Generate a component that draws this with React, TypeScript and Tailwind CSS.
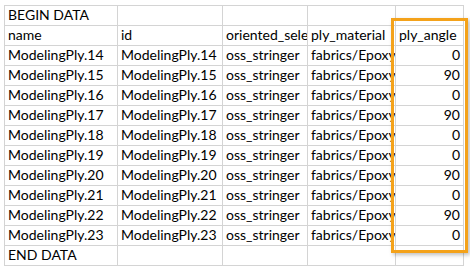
import React from "react";

const rows: [string, string, string, string, number][] = [
  ["ModelingPly.14", "ModelingPly.14", "oss_stringer", "fabrics/Epoxy_Carbon_UD", 0],
  ["ModelingPly.15", "ModelingPly.15", "oss_stringer", "fabrics/Epoxy_Carbon_UD", 90],
  ["ModelingPly.16", "ModelingPly.16", "oss_stringer", "fabrics/Epoxy_Carbon_UD", 0],
  ["ModelingPly.17", "ModelingPly.17", "oss_stringer", "fabrics/Epoxy_Carbon_UD", 90],
  ["ModelingPly.18", "ModelingPly.18", "oss_stringer", "fabrics/Epoxy_Carbon_UD", 0],
  ["ModelingPly.19", "ModelingPly.19", "oss_stringer", "fabrics/Epoxy_Carbon_UD", 0],
  ["ModelingPly.20", "ModelingPly.20", "oss_stringer", "fabrics/Epoxy_Carbon_UD", 90],
  ["ModelingPly.21", "ModelingPly.21", "oss_stringer", "fabrics/Epoxy_Carbon_UD", 0],
  ["ModelingPly.22", "ModelingPly.22", "oss_stringer", "fabrics/Epoxy_Carbon_UD", 90],
  ["ModelingPly.23", "ModelingPly.23", "oss_stringer", "fabrics/Epoxy_Carbon_UD", 0],
];

function Cell({ children, right }: { children?: React.ReactNode; right?: boolean }) {
  return (
    <div
      className={
        "h-[20px] border-r border-b border-[#d4d4d4] overflow-hidden whitespace-nowrap px-[3px] flex items-end pb-[1px] leading-[18px] " +
        (right ? "justify-end" : "justify-start")
      }
    >
      {children}
    </div>
  );
}

export default function App() {
  return (
    <div className="w-[470px] h-[269px] bg-white relative overflow-hidden text-black text-[14px]" style={{ fontFamily: "Lato, 'Liberation Sans', sans-serif" }}>
      <div className="pt-[5px] pl-[4px]">
        <div className="grid grid-cols-[113px_105px_85px_88px_68px] w-fit border-l border-t border-[#d4d4d4]">
          <Cell>BEGIN DATA</Cell>
          <Cell />
          <Cell />
          <Cell />
          <Cell />
          <Cell>name</Cell>
          <Cell>id</Cell>
          <Cell>oriented_selection_sets</Cell>
          <Cell>ply_material</Cell>
          <Cell>ply_angle</Cell>
          {rows.map((r, i) => (
            <React.Fragment key={i}>
              <Cell>{r[0]}</Cell>
              <Cell>{r[1]}</Cell>
              <Cell>{r[2]}</Cell>
              <Cell>{r[3]}</Cell>
              <Cell right>{r[4]}</Cell>
            </React.Fragment>
          ))}
          <Cell>END DATA</Cell>
          <Cell />
          <Cell />
          <Cell />
          <Cell />
        </div>
      </div>
      <div className="absolute left-[391px] top-[18px] w-[77px] h-[235px] border-[3px] border-[#f4a21a] shadow-[2px_2px_4px_rgba(0,0,0,0.25)]" />
    </div>
  );
}
